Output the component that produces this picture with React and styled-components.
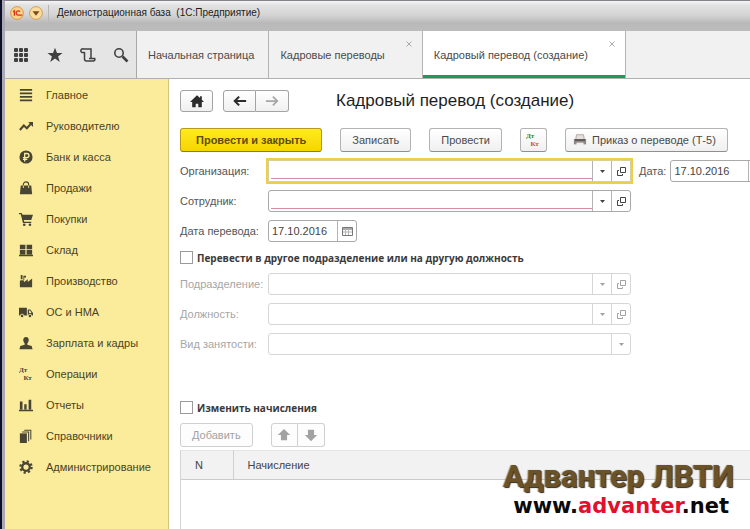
import { useState } from 'react';
import styled, { createGlobalStyle } from 'styled-components';

const GlobalStyle = createGlobalStyle`
  * {
    box-sizing: border-box;
  }
  body {
    margin: 0;
    overflow: hidden;
    background-color: #ffffff;
    font-family: 'Liberation Sans', Arial, sans-serif;
    font-size: 11px;
    color: #444444;
  }
  button, input, select {
    font-family: inherit;
    font-size: inherit;
    color: inherit;
    margin: 0;
  }
`;

const Window = styled.div`
  position: relative;
  display: flex;
  flex-direction: column;
  min-height: 100vh;
  border-left: 2px solid #0c0d26;
  overflow: hidden;
`;

const TitleBar = styled.header`
  display: flex;
  align-items: center;
  height: 31px;
  padding: 0 5px 6px;
  border-top: 1px solid #85828a;
  border-left: 3px solid #a9a9b3;
  background: linear-gradient(#f6f6f6 0, #e2e2e2 4px, #d4d4d4 14px, #b9b9b9 22px, #bcbcbc 100%);
`;

const RoundButton = styled.button`
  display: flex;
  width: 14px;
  height: 14px;
  margin-right: 5px;
  padding: 0;
  border: 0;
  background: none;
`;

const WindowTitle = styled.h1`
  margin: 0;
  padding-left: 8px;
  border-left: 1px solid #b5b5b5;
  font-size: 10px;
  line-height: 16px;
  font-weight: 400;
  color: #1c1c1c;
  white-space: pre;
`;

const TopBar = styled.div`
  display: flex;
  height: 48px;
  border-left: 3px solid #a9a9b3;
  border-bottom: 1px solid #b0b0b0;
  background-color: #f1f1f1;
`;

const Tools = styled.div`
  display: flex;
  align-items: center;
  gap: 17px;
  width: 132px;
  padding-left: 9px;
  border-right: 1px solid #a8a8a8;
  background-color: #e5e5e5;
`;

const ToolButton = styled.button`
  display: flex;
  width: 16px;
  height: 16px;
  padding: 0;
  border: 0;
  background: none;
  color: #404040;
`;

const Tab = styled.div`
  position: relative;
  display: flex;
  align-items: center;
  padding: 1px ${props => (props.$closable ? '37px' : '14px')} 0 11px;
  border-right: 1px solid #b4b4b4;
  background-color: ${props => (props.$active ? '#ffffff' : '#f1f1f1')};
  box-shadow: ${props => (props.$active ? 'inset 0 -3px #1f9a5c' : 'none')};
  a {
    color: #4a4a4a;
    text-decoration: none;
    white-space: nowrap;
    line-height: 16px;
  }
`;

const CloseButton = styled.button`
  position: absolute;
  top: 10px;
  right: 10px;
  display: flex;
  padding: 0;
  border: 0;
  background: none;
  color: #a9a9a9;
`;

const Body = styled.div`
  display: flex;
  flex: 1;
  border-left: 3px solid #a9a9b3;
`;

const Sidebar = styled.nav`
  flex: none;
  width: 164px;
  padding-left: 14px;
  border-right: 1px solid #d3c57e;
  background-color: #fbec9c;
`;

const SidebarLink = styled.a`
  display: flex;
  align-items: center;
  gap: 13px;
  height: 31px;
  color: #4b431f;
  text-decoration: none;
  svg {
    color: #494533;
  }
`;

const Main = styled.main`
  display: flex;
  flex-direction: column;
  flex: 1;
  min-width: 0;
  padding: 11px 0 0 11px;
  overflow: hidden;
`;

const Row = styled.div`
  display: flex;
  align-items: center;
`;

const HeadRow = styled(Row)`
  gap: 10px;
  margin-bottom: 16px;
`;

const Commands = styled(Row)`
  gap: 18px;
  margin-bottom: 4px;
`;

const ListCommands = styled(Row)`
  gap: 18px;
  margin: 4px 0 3px;
`;

const ButtonGroup = styled.div`
  display: flex;
  button {
    border-radius: 3px 0 0 3px;
  }
  button + button {
    border-left: 0;
    border-radius: 0 3px 3px 0;
  }
`;

const Button = styled.button`
  display: flex;
  align-items: center;
  justify-content: center;
  gap: 5px;
  height: 24px;
  padding: 0 11px;
  border: 1px solid #b3b3b3;
  border-bottom-color: #8f8f8f;
  border-radius: 3px;
  background: linear-gradient(#ffffff, #f0f0f0);
  color: #4a4a4a;
  white-space: nowrap;
  &:disabled {
    border-color: #d0d0d0;
    background: #fdfdfd;
    color: #a2a2a2;
  }
`;

const PrimaryButton = styled(Button)`
  padding: 0 15px;
  border-color: #b79a15;
  border-bottom-color: #8d7a1d;
  background: linear-gradient(#ffeb1f, #f5d500);
  color: #5d4c0a;
  font-weight: 700;
`;

const PrintButton = styled(Button)`
  padding-left: 7px;
`;

const SquareButton = styled(Button)`
  width: 27px;
  padding: 0;
`;

const NavButton = styled(Button)`
  width: 33px;
  height: 22px;
  padding: 0;
  border-color: #a3a3a3;
  color: ${props => (props.$dim ? '#a6a6a6' : '#2b2b2b')};
`;

const PageTitle = styled.h2`
  margin: 0 0 0 37px;
  font-size: 17px;
  line-height: 22px;
  font-weight: 400;
  color: #1e1e1e;
  white-space: nowrap;
`;

const FormRow = styled.div`
  display: flex;
  align-items: center;
  height: 30px;
`;

const Label = styled.label`
  flex: none;
  width: ${props => (props.$short ? 'auto' : '88px')};
  margin: ${props => (props.$short ? '0 4px 0 8px' : '0')};
  color: ${props => (props.$disabled ? '#a6a6a6' : '#555555')};
  white-space: nowrap;
`;

const Field = styled.div`
  display: flex;
  flex: none;
  width: ${props => props.$width || '363px'};
  height: 22px;
  border: 1px solid ${props => (props.$disabled ? '#d6d6d6' : '#a9a9a9')};
  border-radius: 3px;
  background-color: #ffffff;
  color: ${props => (props.$disabled ? '#a2a2a2' : '#444444')};
  &.focused {
    border-color: #d8cfa0;
    border-radius: 0;
    box-shadow: 0 0 0 2px #efcf45;
  }
  input, select {
    flex: 1;
    min-width: 0;
    padding: 0 3px;
    border: 0;
    outline: 0;
    background: none;
    appearance: none;
  }
  input.required {
    margin: 0 0 2px 2px;
    border-bottom: 1px solid #d38fa0;
  }
`;

const FieldButton = styled.button`
  display: flex;
  align-items: center;
  justify-content: center;
  flex: none;
  width: 19px;
  padding: 0;
  border: 0;
  border-left: 1px solid ${props => (props.disabled ? '#d6d6d6' : '#b3b3b3')};
  background: none;
`;

const CheckRow = styled.label`
  display: flex;
  align-items: center;
  gap: 4px;
  height: 23px;
  margin-top: ${props => (props.$spaced ? '37px' : '0')};
  font-family: 'Open Sans', sans-serif;
  font-size: 10px;
  font-weight: 700;
  color: #3a3a3a;
  white-space: nowrap;
  input {
    width: 13px;
    height: 13px;
    border: 1px solid #9b9b9b;
    background-color: #ffffff;
    appearance: none;
  }
  input:checked {
    background-color: #8a8a8a;
  }
`;

const Table = styled.table`
  width: 100%;
  border-collapse: collapse;
  th {
    height: 29px;
    padding: 0 14px;
    border-top: 1px solid #e6e6e6;
    border-bottom: 1px solid #cbcbcb;
    background-color: #f2f2f2;
    font-weight: 400;
    text-align: left;
  }
  th:first-child {
    width: 52px;
    border-right: 1px solid #d0d0d0;
  }
`;

const TableWrap = styled.div`
  flex: 1;
  border-left: 1px solid #d5d5d5;
`;

const Watermark = styled.div`
  position: absolute;
  right: 16px;
  bottom: 10px;
  font-weight: 700;
  text-align: right;
  white-space: nowrap;
`;

const Brand = styled.div`
  font-family: Roboto, sans-serif;
  font-size: 31px;
  line-height: 32px;
  color: #6b5227;
  text-shadow: 1px 1px 1px #2e2a22, -1px 0 1px #8f8a80;
`;

const Site = styled.div`
  padding-right: 5px;
  font-family: 'DejaVu Sans', sans-serif;
  font-size: 21px;
  line-height: 26px;
  color: #0a0a0a;
  span {
    color: #e2102c;
  }
`;

const Svg = ({ size = 14, children }) => (
  <svg width={size} height={size} viewBox='0 0 16 16' fill='currentColor' aria-hidden='true'>{children}</svg>
);

const DtKt = ({ first = 'currentColor', second = 'currentColor' }) => (
  <Svg>
    <text x='0' y='6' fontSize='8' fontWeight='700' fontFamily='Liberation Serif, serif' fill={first}>Дт</text>
    <text x='5' y='15' fontSize='8' fontWeight='700' fontFamily='Liberation Serif, serif' fill={second}>Кт</text>
  </Svg>
);

const ArrowDown = () => (
  <svg width='5' height='3' viewBox='0 0 5 3' fill='currentColor' aria-hidden='true'><path d='M0 0h5L2.500 3z' /></svg>
);

const OpenIcon = () => (
  <svg width='9' height='9' viewBox='0 0 9 9' fill='none' stroke='currentColor' aria-hidden='true'>
    <path d='M3.500 .5h5v5h-5zM2 3.500H.5v5h5V7' />
  </svg>
);

const CalendarIcon = () => (
  <svg width='11' height='10' viewBox='0 0 11 10' fill='none' stroke='#777777' aria-hidden='true'>
    <path d='M.5 1.500h10v8H.5z' />
    <path d='M1 3h9' stroke='#555555' />
    <path d='M3.500 3v6M6.500 3v6M1 6h9' stroke='#b5b5b5' />
  </svg>
);

const menu = [
  { name: 'Главное', icon: <Svg><path d='M1 1h14v2H1zM1 5h14v2H1zM1 9h14v2H1zM1 13h14v2H1z' /></Svg> },
  { name: 'Руководителю', icon: <Svg><path d='M1 12.500 5.500 7.500 9 10.500 14 5' fill='none' stroke='currentColor' strokeWidth='2.400' /><path d='M10.500 3.500H16V9z' /></Svg> },
  { name: 'Банк и касса', icon: <Svg><circle cx='8' cy='8' r='7.500' /><path d='M6.500 13V4h2.500a2.300 2.300 0 0 1 0 4.800H4.500M4.500 10.800h5' fill='none' stroke='#fbec9c' strokeWidth='1.500' /></Svg> },
  { name: 'Продажи', icon: <Svg><path d='M2 5h12l1 10H1z' /><path d='M5 8V4a3 3 0 0 1 6 0v4' fill='none' stroke='currentColor' strokeWidth='1.300' /><path d='M5 5v3M11 5v3' stroke='#fbec9c' /></Svg> },
  { name: 'Покупки', icon: <Svg><path d='M0 1h3l1 2h12l-2 6H5.500L6 11h8v1.500H4.500L2 2.500H0z' /><circle cx='6' cy='14.500' r='1.500' /><circle cx='12.500' cy='14.500' r='1.500' /></Svg> },
  { name: 'Склад', icon: <Svg><path d='M1 2h6.300v5H1zM8.700 2H15v5H8.700zM1 8h6.300v5H1zM8.700 8H15v5H8.700zM0 13.500h16V15H0z' /></Svg> },
  { name: 'Производство', icon: <Svg><path d='M1 15V8l1-1h3l1 2 4-3v3l5-4v10zM2 1h2v5H2zM5 2h3v2H6v3H5z' /></Svg> },
  { name: 'ОС и НМА', icon: <Svg><path d='M0 3h9v9H0zM10 5h3l3 4v3h-6z' /><path d='M11.500 6.200h1.200L14.300 9h-2.800z' fill='#fbec9c' /><circle cx='3.500' cy='12.500' r='2' stroke='#fbec9c' /><circle cx='12.500' cy='12.500' r='2' stroke='#fbec9c' /></Svg> },
  { name: 'Зарплата и кадры', icon: <Svg><path d='M8 1a3.400 3.400 0 0 1 3 4.500C10.700 7 10 8 9.500 8.500V10l5 1.500L15.500 15H.5l1-3.500 5-1.500V8.500C6 8 5.300 7 5 5.500A3.400 3.400 0 0 1 8 1z' /></Svg> },
  { name: 'Операции', icon: <DtKt /> },
  { name: 'Отчеты', icon: <Svg><path d='M0 13.500h16V15H0zM1 4h3v9H1zM6 7h2.700v6H6zM11 2h3v11h-3z' /></Svg> },
  { name: 'Справочники', icon: <Svg><path d='M1 5h8v11H1z' /><path d='M3.500 3.500h7.500V14M6 1.500h7.500V12' fill='none' stroke='currentColor' strokeWidth='1.200' /></Svg> },
  { name: 'Администрирование', icon: <Svg><circle cx='8' cy='8' r='4.300' fill='none' stroke='currentColor' strokeWidth='2.600' /><circle cx='8' cy='8' r='6.400' fill='none' stroke='currentColor' strokeWidth='2.600' strokeDasharray='2.500 2.527' /></Svg> }
];

const tabs = [
  { name: 'Начальная страница' },
  { name: 'Кадровые переводы', closable: true },
  { name: 'Кадровый перевод (создание)', closable: true, active: true }
];

function RefField ({ id, label, required, focused, disabled }) {
  return (
    <>
      <Label htmlFor={id} $disabled={disabled}>{label}</Label>
      <Field $disabled={disabled} className={focused ? 'focused' : ''}>
        <input id={id} type='text' disabled={disabled} className={required ? 'required' : ''} />
        <FieldButton disabled={disabled} aria-label='Выбрать из списка'><ArrowDown /></FieldButton>
        <FieldButton disabled={disabled} aria-label='Открыть'><OpenIcon /></FieldButton>
      </Field>
    </>
  );
}

function DateField ({ id, label, short, width }) {
  const [value, setValue] = useState('17.10.2016');

  return (
    <>
      <Label htmlFor={id} $short={short}>{label}</Label>
      <Field $width={width}>
        <input id={id} type='text' value={value} onChange={event => setValue(event.target.value)} />
        <FieldButton aria-label='Календарь'><CalendarIcon /></FieldButton>
      </Field>
    </>
  );
}

function App () {
  return (
    <Window>
      <GlobalStyle />
      <TitleBar>
        <RoundButton aria-label='Меню'>
          <Svg>
            <circle cx='8' cy='8' r='7.300' fill='#fbd48a' stroke='#d98c3a' />
            <path d='M3.500 6.500 5 5.500V11M11.500 6.500A2.500 2.500 0 1 0 9.500 10.500H14' fill='none' stroke='#d4361c' strokeWidth='1.500' />
          </Svg>
        </RoundButton>
        <RoundButton aria-label='Сервис'>
          <Svg>
            <circle cx='8' cy='8' r='7.300' fill='#fbdc9c' stroke='#d0964a' />
            <path d='M4 6h8l-4 5z' fill='#7a4a1c' />
          </Svg>
        </RoundButton>
        <WindowTitle>Демонстрационная база  (1С:Предприятие)</WindowTitle>
      </TitleBar>
      <TopBar>
        <Tools>
          <ToolButton aria-label='Функции'>
            <Svg size={16}>
              {[0, 5, 10].map(y => [0, 5, 10].map(x => <rect key={`${x}-${y}`} x={x} y={y + 1} width='4' height='4' rx='1' />))}
            </Svg>
          </ToolButton>
          <ToolButton aria-label='Избранное'>
            <Svg size={16}><path d='M8 .8 10 6h5.500l-4.400 3.400L12.800 15 8 11.600 3.200 15l1.700-5.600L.5 6H6z' /></Svg>
          </ToolButton>
          <ToolButton aria-label='История'>
            <Svg size={16}><path d='M4.500 5.500H2A1.800 1.800 0 1 1 3.500 2H11v9.500M4.500 5V12a2 2 0 0 0 2 2H13a1.700 1.700 0 0 0 1.700-2.500H9' fill='none' stroke='currentColor' strokeWidth='1.500' /></Svg>
          </ToolButton>
          <ToolButton aria-label='Поиск'>
            <Svg size={16}><circle cx='6' cy='6' r='4.200' fill='none' stroke='currentColor' strokeWidth='1.600' /><path d='m9.500 9.500 5 5' stroke='currentColor' strokeWidth='2.600' /></Svg>
          </ToolButton>
        </Tools>
        {tabs.map(tab => (
          <Tab key={tab.name} $active={tab.active} $closable={tab.closable}>
            <a href='#tab'>{tab.name}</a>
            {tab.closable && (
              <CloseButton aria-label='Закрыть'>
                <svg width='6' height='6' viewBox='0 0 6 6' stroke='currentColor'><path d='m.5.5 5 5m0-5-5 5' /></svg>
              </CloseButton>
            )}
          </Tab>
        ))}
      </TopBar>
      <Body>
        <Sidebar>
          {menu.map(item => (
            <SidebarLink key={item.name} href='#section'>{item.icon}{item.name}</SidebarLink>
          ))}
        </Sidebar>
        <Main>
          <HeadRow>
            <NavButton aria-label='Домой'>
              <Svg><path d='M8 1.500 0 9h2.500v6h4v-4h3v4h4V9H16l-2.500-2.500V2.500h-2v2z' /></Svg>
            </NavButton>
            <ButtonGroup>
              <NavButton aria-label='Назад'>
                <Svg><path d='M15 8H2.500M7 3 2 8l5 5' fill='none' stroke='currentColor' strokeWidth='2.400' /></Svg>
              </NavButton>
              <NavButton $dim aria-label='Вперед'>
                <Svg><path d='M1 8h12.500M9 3l5 5-5 5' fill='none' stroke='currentColor' strokeWidth='2' /></Svg>
              </NavButton>
            </ButtonGroup>
            <PageTitle>Кадровый перевод (создание)</PageTitle>
          </HeadRow>
          <Commands>
            <PrimaryButton>Провести и закрыть</PrimaryButton>
            <Button>Записать</Button>
            <Button>Провести</Button>
            <SquareButton aria-label='Проводки'><DtKt first='#2c8a2c' second='#d8433a' /></SquareButton>
            <PrintButton>
              <Svg>
                <path d='M4 2h8l1 6H3z' fill='#e6dfdc' stroke='#aaa09c' />
                <path d='M1 7h14v6H1z' fill='#8f8987' />
                <path d='M2 7h12v2H2z' fill='#5c5452' />
                <path d='M4 11h8v3.500H4z' fill='#f3efed' />
              </Svg>
              Приказ о переводе (Т-5)
            </PrintButton>
          </Commands>
          <FormRow>
            <RefField id='organization' label='Организация:' required focused />
            <DateField id='date' label='Дата:' short width='98px' />
          </FormRow>
          <FormRow>
            <RefField id='employee' label='Сотрудник:' required />
          </FormRow>
          <FormRow>
            <DateField id='transfer-date' label='Дата перевода:' width='89px' />
          </FormRow>
          <CheckRow>
            <input type='checkbox' />
            Перевести в другое подразделение или на другую должность
          </CheckRow>
          <FormRow>
            <RefField id='department' label='Подразделение:' disabled />
          </FormRow>
          <FormRow>
            <RefField id='position' label='Должность:' disabled />
          </FormRow>
          <FormRow>
            <Label htmlFor='employment' $disabled>Вид занятости:</Label>
            <Field $disabled>
              <select id='employment' disabled />
              <FieldButton disabled aria-label='Выбрать из списка'><ArrowDown /></FieldButton>
            </Field>
          </FormRow>
          <CheckRow $spaced>
            <input type='checkbox' />
            Изменить начисления
          </CheckRow>
          <ListCommands>
            <Button disabled>Добавить</Button>
            <ButtonGroup>
              <SquareButton disabled aria-label='Вверх'><Svg><path d='M8 1 1 8h3.500v6h7V8H15z' /></Svg></SquareButton>
              <SquareButton disabled aria-label='Вниз'><Svg><path d='M8 15 1 8h3.500V2h7v6H15z' /></Svg></SquareButton>
            </ButtonGroup>
          </ListCommands>
          <TableWrap>
            <Table>
              <thead>
                <tr><th>N</th><th>Начисление</th></tr>
              </thead>
            </Table>
          </TableWrap>
        </Main>
      </Body>
      <Watermark>
        <Brand>Адвантер ЛВТИ</Brand>
        <Site>www.<span>advanter</span>.net</Site>
      </Watermark>
    </Window>
  );
}

export default App;
